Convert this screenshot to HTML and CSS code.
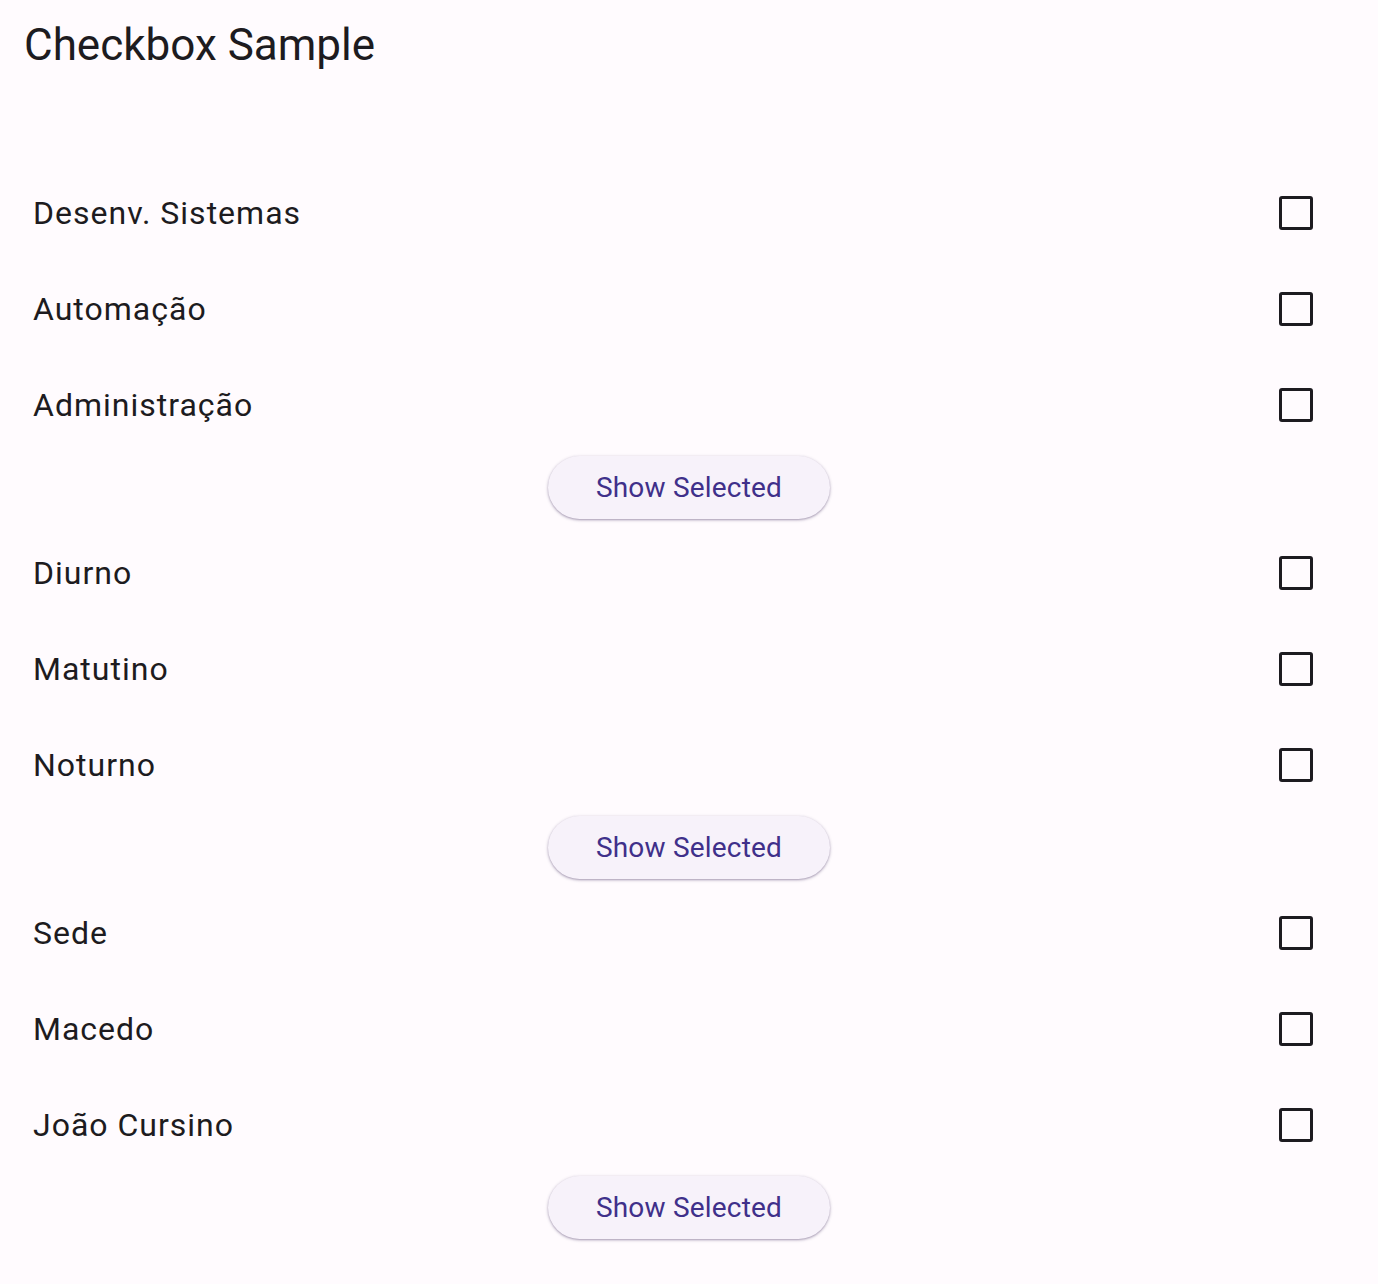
FILE: index.html
```html
<!DOCTYPE html>
<html>
<head>
<meta charset="utf-8">
<link rel="stylesheet" href="styles.css">
</head>
<body>
<div class="app">
  <header class="appbar"><h1 class="title">Checkbox Sample</h1></header>
  <main class="content">
    <section class="group">
      <label class="row"><span class="label">Desenv. Sistemas</span><span class="box"></span></label>
      <label class="row"><span class="label">Automação</span><span class="box"></span></label>
      <label class="row"><span class="label">Administração</span><span class="box"></span></label>
      <div class="btn-wrap"><button class="btn">Show Selected</button></div>
    </section>
    <section class="group">
      <label class="row"><span class="label">Diurno</span><span class="box"></span></label>
      <label class="row"><span class="label">Matutino</span><span class="box"></span></label>
      <label class="row"><span class="label">Noturno</span><span class="box"></span></label>
      <div class="btn-wrap"><button class="btn">Show Selected</button></div>
    </section>
    <section class="group">
      <label class="row"><span class="label">Sede</span><span class="box"></span></label>
      <label class="row"><span class="label">Macedo</span><span class="box"></span></label>
      <label class="row"><span class="label">João Cursino</span><span class="box"></span></label>
      <div class="btn-wrap"><button class="btn">Show Selected</button></div>
    </section>
  </main>
</div>
</body>
</html>
```
FILE: styles.css
```css
html, body {
  margin: 0;
  padding: 0;
  background: #fffbfe;
  font-family: Roboto, "Liberation Sans", sans-serif;
  color: #1d1b20;
}
.app {
  width: 1378px;
  height: 1284px;
  overflow: hidden;
}
.appbar {
  height: 90px;
  display: flex;
  align-items: center;
  padding-left: 24px;
}
.title {
  margin: 0;
  font-size: 44px;
  font-weight: 400;
  color: #1d1b20;
}
.content {
  padding-top: 75px;
  display: flex;
  flex-direction: column;
}
.group {
  display: flex;
  flex-direction: column;
}
.row {
  height: 96px;
  display: flex;
  align-items: center;
  justify-content: space-between;
  padding: 0 65px 0 33px;
}
.label {
  font-size: 32px;
  letter-spacing: 1px;
  color: #1d1b20;
}
.box {
  width: 34px;
  height: 34px;
  box-sizing: border-box;
  border: 3.5px solid #1d1b20;
  border-radius: 3px;
}
.btn-wrap {
  height: 72px;
  display: flex;
  align-items: center;
  justify-content: center;
  padding-bottom: 4px;
  box-sizing: border-box;
}
.btn {
  width: 282px;
  height: 63px;
  border: none;
  border-radius: 32px;
  background: #f7f2fa;
  color: #40308a;
  font-family: Roboto, "Liberation Sans", sans-serif;
  font-size: 28px;
  letter-spacing: 0.2px;
  box-shadow: 0 1px 2px rgba(60, 40, 90, 0.35), 0 1px 3px 1px rgba(60, 40, 90, 0.12);
}
```
